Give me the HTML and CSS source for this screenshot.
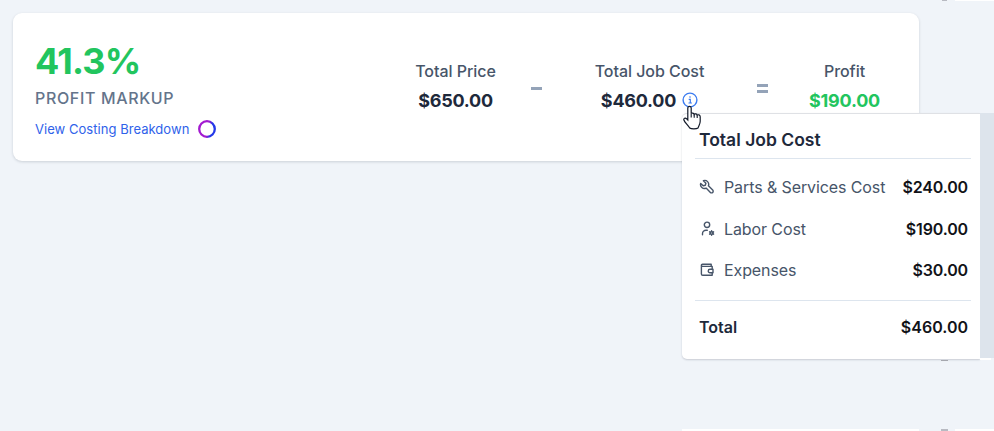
FILE: index.html
```
<!DOCTYPE html>
<html lang="en">
<head>
  <meta charset="UTF-8">
  <meta name="viewport" content="width=device-width, initial-scale=1.0">
  <title>Profit Markup</title>
  <link rel="stylesheet" href="styles.css">
</head>
<body>
  <section class="card">
    <div class="markup">
      <div class="markup-value">41.3%</div>
      <div class="markup-label">PROFIT MARKUP</div>
      <a class="breakdown-link"><span>View Costing Breakdown</span>
        <svg class="ring" viewBox="0 0 20 20">
          <defs>
            <linearGradient id="ringFill" x1="0" y1="0" x2="1" y2="0.2">
              <stop offset="0.6" stop-color="#a31ad0"/>
              <stop offset="0.85" stop-color="#2338e8"/>
            </linearGradient>
          </defs>
          <circle cx="10" cy="10" r="7.8" fill="none" stroke="url(#ringFill)" stroke-width="2.3"/>
        </svg>
      </a>
    </div>

    <div class="metrics">
      <div class="metric">
        <div class="metric-label">Total Price</div>
        <div class="metric-value">$650.00</div>
      </div>
      <div class="operator"><span class="bar"></span></div>
      <div class="metric">
        <div class="metric-label">Total Job Cost</div>
        <div class="metric-value">
          <span>$460.00</span>
          <svg class="info" viewBox="0 0 16 16" fill="none" stroke="#3b7bf0" stroke-width="1.4">
            <circle cx="8" cy="8" r="6.9"/>
            <path d="M6.7 7.3h1.6v3.6M6.5 11h3.4" stroke-width="1.2"/>
            <circle cx="8" cy="5" r="0.8" fill="#3b7bf0" stroke="none"/>
          </svg>
        </div>
      </div>
      <div class="operator"><span class="bar"></span><span class="bar"></span></div>
      <div class="metric">
        <div class="metric-label">Profit</div>
        <div class="metric-value profit">$190.00</div>
      </div>
    </div>
  </section>

  <div class="popover">
    <h2>Total Job Cost</h2>
    <ul class="costs">
      <li>
        <svg class="icon" viewBox="0 0 16 16">
          <path d="M4.400 1.700a3.900 3.900 0 0 1 5 5.100l4.300 4.300a1.600 1.600 0 0 1-2.300 2.300L7.100 9.100a3.900 3.900 0 0 1-5.400-4.700L4.200 6.800 6.300 6.300 6.900 4.200z"/>
        </svg>
        <span class="cost-name">Parts &amp; Services Cost</span>
        <span class="cost-value">$240.00</span>
      </li>
      <li>
        <svg class="icon" viewBox="0 0 16 16">
          <circle cx="8" cy="3.800" r="2.700"/>
          <path d="M3.500 13.800v-1a3.500 3.500 0 0 1 3.500-3.500h1.300"/>
          <circle cx="12.600" cy="12" r="1.400"/>
          <path d="M12.600 9.700v1M12.600 13.300v1M10.600 10.800l.8.500M13.800 12.700l.8.500M10.600 13.200l.8-.5M13.800 11.300l.8-.5"/>
        </svg>
        <span class="cost-name">Labor Cost</span>
        <span class="cost-value">$190.00</span>
      </li>
      <li>
        <svg class="icon" viewBox="0 0 16 16">
          <path d="M12.200 4.400V2.200H3.500a1.100 1.100 0 0 0 0 2.200h9.700V7M2.400 3.300v8.700a1.300 1.300 0 0 0 1.300 1.300h9.500V11"/>
          <path d="M14 7.200v3.500h-3a1.750 1.750 0 0 1 0-3.500z"/>
        </svg>
        <span class="cost-name">Expenses</span>
        <span class="cost-value">$30.00</span>
      </li>
    </ul>
    <div class="total">
      <span>Total</span>
      <span class="cost-value">$460.00</span>
    </div>
  </div>

  <!-- edges of the neighbouring panels -->
  <div class="side-strip"></div>
  <div class="edge edge-top"></div>
  <div class="edge edge-corner"></div>
  <div class="edge edge-bottom"></div>
  <div class="edge edge-bottom-right"></div>
  <div class="thumb thumb-top"></div>
  <div class="thumb thumb-middle"></div>
  <div class="thumb thumb-bottom"></div>

  <svg class="cursor" viewBox="0 0 20 25">
    <path d="M6.500 1.400c1 0 1.700.7 1.700 1.700v5.500c.3-.7 2.700-.8 3 .7.500-.8 2.700-.6 3 .8.800-.7 3-.3 3 1.600v4.500c0 3-1.600 4.500-2.200 6.800-1.500 1.200-6.800 1.200-8.300 0C5.400 20.700 1.500 17.200.9 15c-.5-1.700 1.400-2.400 2.600-1.300l1.300 1.300V3.100c0-1 .7-1.700 1.700-1.700z" fill="#fff" stroke="#111827" stroke-width="1.200"/>
    <path d="M8.200 8.600v4M11.200 9.300v3.500M14.200 10.200v2.800" fill="none" stroke="#111827" stroke-width="1.100"/>
  </svg>
</body>
</html>
```

FILE: styles.css
```
:root {
  --bg: #f0f4f9;
  --border: #dde5ee;
  --strip: #dde4ec;
  --text: #1e293b;
  --muted: #475569;
  --green: #22c55e;
}

* {
  box-sizing: border-box;
}

body {
  position: relative;
  margin: 0;
  height: 431px;
  padding: 13px;
  overflow: hidden;
  background: var(--bg);
  color: var(--text);
  font-family: Inter, sans-serif;
  font-size: 16px;
}

.card {
  display: flex;
  justify-content: space-between;
  width: 906px;
  height: 148px;
  padding: 27px 16px 0 22px;
  background: #fff;
  border-radius: 9px;
  box-shadow: 0 1px 3px rgba(15, 23, 42, 0.16);
}

.markup-value {
  color: var(--green);
  font-size: 36px;
  font-weight: 700;
  line-height: 42px;
  letter-spacing: -0.8px;
}

.markup-label {
  margin-top: 4px;
  color: #64748b;
  font-weight: 500;
  line-height: 24px;
  letter-spacing: 0.65px;
}

.breakdown-link {
  display: flex;
  align-items: center;
  gap: 8px;
  margin-top: 9px;
  color: #2f62ea;
  font-size: 13px;
  line-height: 20px;
  letter-spacing: 0.04px;
}

.ring {
  width: 20px;
  height: 20px;
}

.metrics {
  display: grid;
  grid-template-columns: 115px 47px 179px 47px 117px;
  align-self: flex-start;
  padding-top: 19px;
  text-align: center;
}

.metric-label {
  color: var(--muted);
  font-weight: 500;
  line-height: 24px;
  letter-spacing: -0.04px;
}

.metric-value {
  display: flex;
  align-items: center;
  justify-content: center;
  gap: 6px;
  margin-top: 4px;
  font-size: 18px;
  font-weight: 650;
  line-height: 28px;
  letter-spacing: -0.25px;
}

.profit {
  color: var(--green);
}

.info {
  width: 16px;
  height: 16px;
  margin-top: -2px;
}

.operator {
  display: flex;
  flex-direction: column;
  align-items: center;
  justify-content: center;
  gap: 3px;
  padding-top: 3px;
}

.bar {
  width: 11px;
  height: 3px;
  background: #94a3b8;
}

.popover {
  position: absolute;
  top: 113px;
  left: 682px;
  width: 298px;
  height: 246px;
  padding: 8px 9px 0 13px;
  background: #fff;
  border-top: 1px solid #dfe1e5;
  border-radius: 5px 0 0 5px;
  box-shadow: 0 1px 2px rgba(15, 23, 42, 0.18);
}

.popover h2 {
  margin: 0;
  padding: 4px 4px 0;
  height: 37px;
  border-bottom: 1px solid var(--border);
  font-size: 17.500px;
  font-weight: 600;
  line-height: 28px;
}

.costs {
  margin: 0;
  padding: 7.500px 3px 0 4px;
  height: 141px;
  list-style: none;
}

.costs li {
  display: flex;
  align-items: center;
  height: 41.500px;
  color: var(--muted);
}

.icon {
  width: 16px;
  height: 16px;
  margin-right: 9px;
  fill: none;
  stroke: var(--muted);
  stroke-width: 1.400;
  stroke-linecap: round;
  stroke-linejoin: round;
}

.cost-name {
  letter-spacing: -0.1px;
}

.cost-value {
  margin-left: auto;
  color: #111318;
  font-size: 16px;
  font-weight: 600;
  letter-spacing: -0.15px;
}

.total {
  display: flex;
  align-items: center;
  height: 53px;
  padding: 0 3px 0 4px;
  border-top: 1px solid var(--border);
  font-weight: 600;
}

.total .cost-value {
  letter-spacing: 0;
}

.side-strip {
  position: absolute;
  top: 113px;
  left: 980px;
  width: 14px;
  height: 245px;
  background: var(--strip);
}

.edge {
  position: absolute;
  background: #fff;
}

.edge-top {
  top: 0;
  left: 955px;
  width: 39px;
  height: 1px;
}

.edge-corner {
  top: 358px;
  left: 980px;
  width: 11px;
  height: 2px;
}

.edge-bottom {
  top: 429px;
  left: 682px;
  width: 237px;
  height: 2px;
}

.edge-bottom-right {
  top: 429px;
  left: 955px;
  width: 39px;
  height: 2px;
}

.thumb {
  position: absolute;
  left: 941px;
  width: 7px;
  background: #b8bac2;
}

.thumb-top {
  top: 0;
  left: 942px;
  width: 5px;
  height: 1px;
}

.thumb-middle {
  top: 360px;
  height: 1px;
  background: #a5a7ae;
}

.thumb-bottom {
  top: 429px;
  height: 2px;
}

.cursor {
  position: absolute;
  top: 105px;
  left: 683px;
  width: 20px;
  height: 25px;
}
```
